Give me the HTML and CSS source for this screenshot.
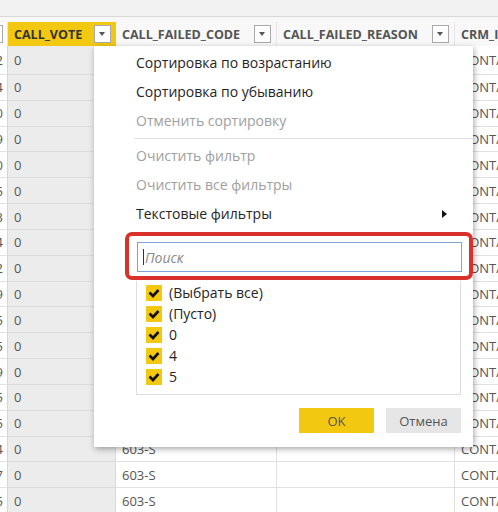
FILE: index.html
```html
<!DOCTYPE html>
<html lang="ru">
<head>
<meta charset="utf-8">
<link rel="stylesheet" href="styles.css">
</head>
<body>
<div class="topbar"></div>
<div class="spacer"></div>
<div class="grid">
  <div class="hcell idx"><span class="ddbtn"></span></div>
  <div class="hcell sel"><span class="htext">CALL_VOTE</span><span class="ddbtn"></span></div>
  <div class="hcell"><span class="htext">CALL_FAILED_CODE</span><span class="ddbtn"></span></div>
  <div class="hcell"><span class="htext">CALL_FAILED_REASON</span><span class="ddbtn"></span></div>
  <div class="hcell"><span class="htext">CRM_ID</span><span class="ddbtn"></span></div>

  <div class="cell idx">1002</div><div class="cell vote">0</div><div class="cell">603-S</div><div class="cell"></div><div class="cell">CONTACT</div>
  <div class="cell idx">1014</div><div class="cell vote">0</div><div class="cell">603-S</div><div class="cell"></div><div class="cell">CONTACT</div>
  <div class="cell idx">1020</div><div class="cell vote">0</div><div class="cell">603-S</div><div class="cell"></div><div class="cell">CONTACT</div>
  <div class="cell idx">1029</div><div class="cell vote">0</div><div class="cell">603-S</div><div class="cell"></div><div class="cell">CONTACT</div>
  <div class="cell idx">1030</div><div class="cell vote">0</div><div class="cell">603-S</div><div class="cell"></div><div class="cell">CONTACT</div>
  <div class="cell idx">1045</div><div class="cell vote">0</div><div class="cell">603-S</div><div class="cell"></div><div class="cell">CONTACT</div>
  <div class="cell idx">1053</div><div class="cell vote">0</div><div class="cell">603-S</div><div class="cell"></div><div class="cell">CONTACT</div>
  <div class="cell idx">1064</div><div class="cell vote">0</div><div class="cell">603-S</div><div class="cell"></div><div class="cell">CONTACT</div>
  <div class="cell idx">1072</div><div class="cell vote">0</div><div class="cell">603-S</div><div class="cell"></div><div class="cell">CONTACT</div>
  <div class="cell idx">1089</div><div class="cell vote">0</div><div class="cell">603-S</div><div class="cell"></div><div class="cell">CONTACT</div>
  <div class="cell idx">1095</div><div class="cell vote">0</div><div class="cell">603-S</div><div class="cell"></div><div class="cell">CONTACT</div>
  <div class="cell idx">1105</div><div class="cell vote">0</div><div class="cell">603-S</div><div class="cell"></div><div class="cell">CONTACT</div>
  <div class="cell idx">1119</div><div class="cell vote">0</div><div class="cell">603-S</div><div class="cell"></div><div class="cell">CONTACT</div>
  <div class="cell idx">1125</div><div class="cell vote">0</div><div class="cell">603-S</div><div class="cell"></div><div class="cell">CONTACT</div>
  <div class="cell idx">1135</div><div class="cell vote">0</div><div class="cell">603-S</div><div class="cell"></div><div class="cell">CONTACT</div>
  <div class="cell idx">1144</div><div class="cell vote">0</div><div class="cell">603-S</div><div class="cell"></div><div class="cell">CONTACT</div>
  <div class="cell idx">1157</div><div class="cell vote">0</div><div class="cell">603-S</div><div class="cell"></div><div class="cell">CONTACT</div>
  <div class="cell idx">1165</div><div class="cell vote">0</div><div class="cell">603-S</div><div class="cell"></div><div class="cell">CONTACT</div>
</div>

<div class="popup">
  <div class="mitem">Сортировка по возрастанию</div>
  <div class="mitem">Сортировка по убыванию</div>
  <div class="mitem dis">Отменить сортировку</div>
  <div class="msep"></div>
  <div class="mitem dis">Очистить фильтр</div>
  <div class="mitem dis">Очистить все фильтры</div>
  <div class="mitem sub">Текстовые фильтры<span class="subarrow"></span></div>
  <div class="highlight">
    <div class="search"><span class="caret"></span><span class="ph">Поиск</span></div>
  </div>
  <div class="list">
    <div class="litem"><span class="chk"><svg width="16" height="16" viewBox="0 0 16 16"><polyline points="3.5,7.5 7,11 12.5,5" fill="none" stroke="#111" stroke-width="2.6"/></svg></span>(Выбрать все)</div>
    <div class="litem"><span class="chk"><svg width="16" height="16" viewBox="0 0 16 16"><polyline points="3.5,7.5 7,11 12.5,5" fill="none" stroke="#111" stroke-width="2.6"/></svg></span>(Пусто)</div>
    <div class="litem"><span class="chk"><svg width="16" height="16" viewBox="0 0 16 16"><polyline points="3.5,7.5 7,11 12.5,5" fill="none" stroke="#111" stroke-width="2.6"/></svg></span>0</div>
    <div class="litem"><span class="chk"><svg width="16" height="16" viewBox="0 0 16 16"><polyline points="3.5,7.5 7,11 12.5,5" fill="none" stroke="#111" stroke-width="2.6"/></svg></span>4</div>
    <div class="litem"><span class="chk"><svg width="16" height="16" viewBox="0 0 16 16"><polyline points="3.5,7.5 7,11 12.5,5" fill="none" stroke="#111" stroke-width="2.6"/></svg></span>5</div>
  </div>
  <div class="buttons">
    <div class="btn ok">OK</div>
    <div class="btn cancel">Отмена</div>
  </div>
</div>
</body>
</html>
```
FILE: styles.css
```css
html, body {
  margin: 0;
  padding: 0;
  overflow: hidden;
  width: 498px;
  height: 512px;
}
body {
  position: relative;
  background: #f8f8f8;
  font-family: "Open Sans", "Noto Sans", sans-serif;
  color: #333;
}
.topbar {
  height: 16px;
  background: #f2f2f2;
  border-bottom: 1px solid #d8d8d8;
}
.spacer {
  height: 5px;
  background: #f8f8f8;
}
.grid {
  margin-left: -32px;
  display: grid;
  grid-template-columns: 40px 108px 161px 178px 200px;
  grid-template-rows: 24px 29px repeat(17, 25.83px);
  width: 687px;
}
.hcell {
  box-sizing: border-box;
  display: flex;
  align-items: center;
  justify-content: space-between;
  padding: 0 5px 0 6px;
  background: #f8f8f8;
  border-right: 1px solid #e6e6e6;
  font-size: 12.5px;
  font-weight: 700;
  color: #555;
  white-space: nowrap;
  overflow: hidden;
}
.hcell.idx {
  justify-content: flex-end;
  padding-right: 4px;
  background: #fbfbfb;
}
.hcell.sel {
  background: #f2c811;
  color: #333;
  border-right: none;
}
.ddbtn {
  box-sizing: border-box;
  width: 17px;
  height: 18px;
  flex: none;
  border: 1px solid #a9a9a9;
  background: #fdfdfd;
  position: relative;
}
.ddbtn::after {
  content: "";
  position: absolute;
  left: 4px;
  top: 6px;
  border-left: 3.5px solid transparent;
  border-right: 3.5px solid transparent;
  border-top: 4px solid #555;
}
.cell {
  box-sizing: border-box;
  background: #fff;
  border-right: 1px solid #e1e1e1;
  border-bottom: 1px solid #e1e1e1;
  padding-left: 6px;
  display: flex;
  align-items: center;
  font-size: 13px;
  color: #555;
  white-space: nowrap;
  overflow: hidden;
}
.cell.idx {
  justify-content: flex-end;
  padding-right: 4px;
  border-right: 1px solid #d6d6d6;
}
.cell.vote {
  background: #ececec;
  border-right: 1px solid #dadada;
  border-bottom: 1px solid #dcdcdc;
}
.popup {
  position: absolute;
  left: 94px;
  top: 46px;
  width: 379px;
  height: 401px;
  box-sizing: border-box;
  padding-top: 2px;
  background: #fff;
  box-shadow: 1px 2px 6px rgba(0,0,0,0.35);
}
.mitem {
  height: 29px;
  display: flex;
  align-items: center;
  justify-content: space-between;
  padding-left: 42px;
  padding-right: 26px;
  font-size: 14px;
  color: #252525;
}
.mitem.dis {
  color: #a0a0a0;
}
.msep {
  height: 6px;
  margin-left: 40px;
  display: flex;
  align-items: center;
}
.msep::after {
  content: "";
  flex: 1;
  height: 1px;
  background: #e2e2e2;
}
.subarrow {
  width: 0;
  height: 0;
  border-top: 4.5px solid transparent;
  border-bottom: 4.5px solid transparent;
  border-left: 5px solid #111;
}
.highlight {
  margin-top: 4px;
  margin-left: 31px;
  width: 348px;
  height: 48px;
  box-sizing: border-box;
  border: 4px solid #d8322b;
  border-radius: 7px;
  padding: 6px 7px 4px 8px;
}
.search {
  box-sizing: border-box;
  height: 30px;
  border: 1px solid #7aa6dc;
  display: flex;
  align-items: center;
  padding-left: 5px;
}
.caret {
  width: 1px;
  height: 16px;
  background: #333;
  margin-right: 1px;
}
.ph {
  font-style: italic;
  font-size: 14px;
  color: #8a8a8a;
}
.list {
  margin-top: 1px;
  margin-left: 42px;
  width: 325px;
  height: 114px;
  box-sizing: border-box;
  border: 1px solid #dedede;
  border-top: none;
  padding-top: 1px;
}
.litem {
  height: 21px;
  display: flex;
  align-items: center;
  padding-left: 9px;
  font-size: 14px;
  color: #252525;
}
.chk {
  width: 16px;
  height: 16px;
  background: #f2c811;
  margin-right: 7px;
  display: flex;
}
.buttons {
  margin-top: 13px;
  display: flex;
  justify-content: flex-end;
  gap: 12px;
  padding-right: 12px;
}
.btn {
  width: 75px;
  height: 25px;
  display: flex;
  align-items: center;
  justify-content: center;
  font-size: 13px;
  color: #555;
}
.btn.ok {
  background: #f2c811;
}
.btn.cancel {
  background: #e6e6e6;
}
```
